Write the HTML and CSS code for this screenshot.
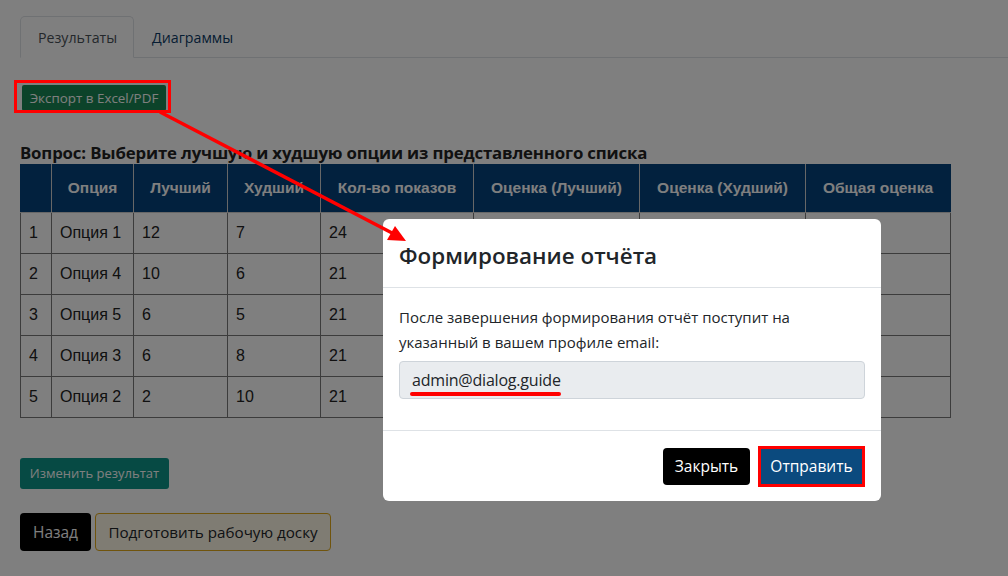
FILE: index.html
```html
<!DOCTYPE html>
<html lang="ru">
<head>
<meta charset="utf-8">
<link rel="stylesheet" href="styles.css">
</head>
<body>
<div class="page">
  <ul class="tabs">
    <li class="tab active">Результаты</li>
    <li class="tab">Диаграммы</li>
  </ul>
  <button class="btn btn-export">Экспорт в Excel/PDF</button>
  <h3 class="question">Вопрос: Выберите лучшую и худшую опции из представленного списка</h3>
  <table class="results">
    <colgroup>
      <col style="width:31px"><col style="width:82px"><col style="width:94px"><col style="width:93px"><col style="width:153px"><col style="width:166px"><col style="width:166px"><col style="width:145px">
    </colgroup>
    <thead>
      <tr><th></th><th>Опция</th><th>Лучший</th><th>Худший</th><th>Кол-во показов</th><th>Оценка (Лучший)</th><th>Оценка (Худший)</th><th>Общая оценка</th></tr>
    </thead>
    <tbody>
      <tr><td>1</td><td>Опция 1</td><td>12</td><td>7</td><td>24</td><td></td><td></td><td></td></tr>
      <tr><td>2</td><td>Опция 4</td><td>10</td><td>6</td><td>21</td><td></td><td></td><td></td></tr>
      <tr><td>3</td><td>Опция 5</td><td>6</td><td>5</td><td>21</td><td></td><td></td><td></td></tr>
      <tr><td>4</td><td>Опция 3</td><td>6</td><td>8</td><td>21</td><td></td><td></td><td></td></tr>
      <tr><td>5</td><td>Опция 2</td><td>2</td><td>10</td><td>21</td><td></td><td></td><td></td></tr>
    </tbody>
  </table>
  <button class="btn btn-change">Изменить результат</button>
  <div class="actions">
    <button class="btn btn-back">Назад</button>
    <button class="btn btn-board">Подготовить рабочую доску</button>
  </div>
</div>

<div class="backdrop"></div>

<div class="modal">
  <div class="modal-header"><h2 class="modal-title">Формирование отчёта</h2></div>
  <div class="modal-body">
    <p class="modal-text">После завершения формирования отчёт поступит на указанный в вашем профиле email:</p>
    <div class="email-field"><span class="email">admin@dialog.guide</span></div>
  </div>
  <div class="modal-footer">
    <button class="btn btn-close">Закрыть</button>
    <button class="btn btn-send">Отправить</button>
  </div>
</div>

<div class="mark-export"></div>
<svg class="arrow" width="1008" height="576" viewBox="0 0 1008 576">
  <line x1="160" y1="112" x2="394" y2="234" stroke="#ff0000" stroke-width="3.5"/>
  <polygon points="406,241 387,240 395,226" fill="#ff0000"/>
</svg>
</body>
</html>
```

FILE: styles.css
```css
* { box-sizing: border-box; }
html, body { margin: 0; padding: 0; }
body {
  width: 1008px;
  height: 576px;
  overflow: hidden;
  background: #ffffff;
  font-family: "Open Sans", "Noto Sans", sans-serif;
  color: #212529;
  position: relative;
}
.page {
  padding: 16px 0 0 20px;
  display: flex;
  flex-direction: column;
  align-items: flex-start;
}
.tabs {
  list-style: none;
  margin: 0;
  padding: 0;
  display: flex;
  align-self: stretch;
  border-bottom: 1px solid #dee2e6;
}
.tab {
  height: 42px;
  margin-bottom: -1px;
  padding: 0 16px 0 17px;
  display: flex;
  align-items: center;
  font-size: 14.2px;
  color: #0d3b66;
  border: 1px solid transparent;
  border-radius: 5px 5px 0 0;
}
.tab.active {
  color: #495057;
  background: #fff;
  border-color: #dee2e6 #dee2e6 #fff;
}
.btn {
  font-family: "Open Sans", "Noto Sans", sans-serif;
  border: 1px solid transparent;
  border-radius: 4px;
  cursor: pointer;
  display: inline-flex;
  align-items: center;
  justify-content: center;
}
.btn-export {
  margin: 27px 0 0 2px;
  height: 26px;
  width: 144px;
  padding: 0;
  font-size: 13.4px;
  background: #198754;
  color: #ffffff;
  border-radius: 2px;
}
.question {
  margin: 32px 0 1px;
  font-family: "Open Sans", sans-serif;
  font-size: 16.8px;
  font-weight: 700;
  line-height: 20px;
  color: #222;
  letter-spacing: -0.15px;
}
.results {
  width: 930px;
  border-collapse: collapse;
  table-layout: fixed;
  font-family: "Liberation Sans", Arial, sans-serif;
  font-size: 16px;
}
.results th {
  height: 48px;
  background: #04427c;
  color: #ffffff;
  font-weight: 700;
  font-size: 15.5px;
  border: 1px solid #cfcfcf;
  border-top: none;
  text-align: center;
}
.results th:first-child { border-left-color: #04427c; }
.results th:last-child { border-right-color: #04427c; }
.results td {
  height: 41px;
  padding: 0 8px;
  border: 1px solid #787878;
  color: #222;
}
.btn-change {
  margin-top: 40px;
  height: 31px;
  width: 149px;
  padding: 0;
  font-size: 13px;
  background: #0d9488;
  color: #ffffff;
  border-radius: 3px;
}
.actions {
  margin-top: 24px;
  display: flex;
  gap: 4px;
}
.btn-back {
  height: 38px;
  width: 71px;
  padding: 0;
  font-size: 15.5px;
  background: #000;
  color: #fff;
}
.btn-board {
  height: 38px;
  width: 236px;
  padding: 0;
  font-size: 15.2px;
  background: #fff8e6;
  color: #212529;
  border-color: #e0a81a;
}
.backdrop {
  position: absolute;
  inset: 0;
  background: rgba(0, 0, 0, 0.5);
}
.modal {
  position: absolute;
  left: 383px;
  top: 219px;
  width: 498px;
  height: 282px;
  background: #fff;
  border-radius: 6px;
  display: flex;
  flex-direction: column;
}
.modal-header {
  height: 69px;
  padding: 0 16px;
  display: flex;
  align-items: center;
  border-bottom: 1px solid #dee2e6;
}
.modal-title {
  margin: 4px 0 0;
  font-size: 22.4px;
  font-weight: 600;
  color: #212529;
}
.modal-body {
  height: 143px;
  padding: 17px 16px 0;
  border-bottom: 1px solid #dee2e6;
}
.modal-text {
  margin: 0 0 6px;
  font-size: 15px;
  line-height: 25px;
  color: #212529;
}
.email-field {
  height: 38px;
  padding: 0 12px;
  display: flex;
  align-items: center;
  background: #e9ecef;
  border: 1px solid #ced4da;
  border-radius: 4px;
  font-size: 16px;
  color: #212529;
}
.email {
  position: relative;
  letter-spacing: -0.2px;
}
.email::after {
  content: "";
  position: absolute;
  left: -2px;
  right: 0;
  bottom: -5px;
  height: 4px;
  border-radius: 2px;
  background: #ff0000;
}
.modal-footer {
  flex: 1;
  display: flex;
  align-items: center;
  justify-content: flex-end;
  gap: 11px;
  padding: 0 19px 0 16px;
}
.btn-close {
  height: 37px;
  width: 87px;
  padding: 0;
  font-size: 15.5px;
  background: #000;
  color: #fff;
}
.btn-send {
  height: 35px;
  width: 101px;
  padding: 0;
  font-size: 15.5px;
  background: #0b4a7e;
  color: #fff;
  border-radius: 0;
  outline: 3px solid #ff0000;
}
.mark-export {
  position: absolute;
  left: 14px;
  top: 80px;
  width: 157px;
  height: 33px;
  border: 3px solid #ff0000;
}
.arrow {
  position: absolute;
  left: 0;
  top: 0;
  pointer-events: none;
}
```
